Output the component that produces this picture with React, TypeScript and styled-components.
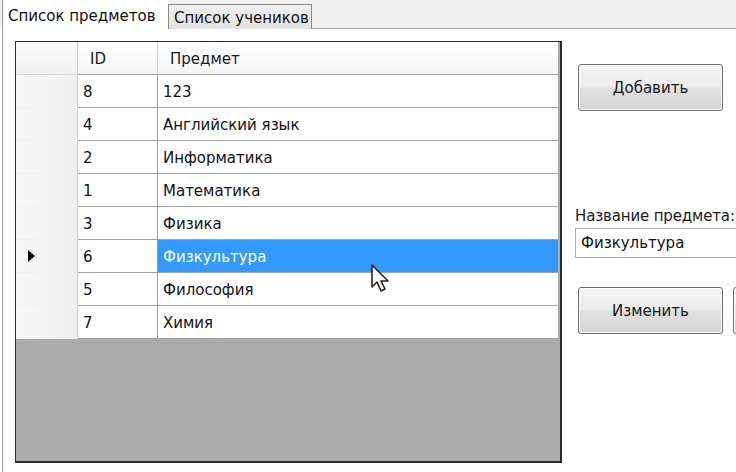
import React from 'react'
import styled, { createGlobalStyle } from 'styled-components'

const GlobalStyle = createGlobalStyle`
    html, body {
        margin: 0;
        padding: 0;
        background: #ffffff;
    }
    body {
        font-family: "DejaVu Sans", "Liberation Sans", Arial, sans-serif;
        color: #000;
    }
`

const subjects = [
    { id: 8, name: '123' },
    { id: 4, name: 'Английский язык' },
    { id: 2, name: 'Информатика' },
    { id: 1, name: 'Математика' },
    { id: 3, name: 'Физика' },
    { id: 6, name: 'Физкультура' },
    { id: 5, name: 'Философия' },
    { id: 7, name: 'Химия' },
]

const selectedId = 6

const App = () => {
    return (
        <>
            <GlobalStyle />
            <Window>
                <TabStrip>
                    <Tab active>Список предметов</Tab>
                    <Tab>Список учеников</Tab>
                    <StripRest />
                </TabStrip>
                <Panel>
                    <Grid>
                        <HeaderRow>
                            <RowHeaderCell header />
                            <HeaderCell>ID</HeaderCell>
                            <HeaderCell last>Предмет</HeaderCell>
                        </HeaderRow>
                        {subjects.map((s) => (
                            <Row key={s.id}>
                                <RowHeaderCell>
                                    {s.id === selectedId && <Marker />}
                                </RowHeaderCell>
                                <Cell>{s.id}</Cell>
                                <Cell last selected={s.id === selectedId}>{s.name}</Cell>
                            </Row>
                        ))}
                        <EmptyArea />
                    </Grid>
                    <Side>
                        <Button>Добавить</Button>
                        <FieldLabel>Название предмета:</FieldLabel>
                        <TextBox>Физкультура</TextBox>
                        <ButtonRow>
                            <Button>Изменить</Button>
                            <Button />
                        </ButtonRow>
                    </Side>
                </Panel>
                <Cursor viewBox="0 0 20 30">
                    <path
                        d="M2 1 L2 23 L7 18 L11 27 L15 25 L11 17 L18 17 Z"
                        fill="#ffffff"
                        stroke="#222"
                        strokeWidth="1.6"
                        strokeLinejoin="round"
                    />
                </Cursor>
            </Window>
        </>
    )
}

export default App

const Window = styled.div`
    position: relative;
    width: 736px;
    height: 472px;
    overflow: hidden;
    background: #ffffff;
    font-size: 15px;
    color: #111;
`

const TabStrip = styled.div`
    display: flex;
    height: 29px;
    background: #f0f0f0;
    padding-left: 2px;
`

const Tab = styled.div<{ active?: boolean }>`
    display: flex;
    align-items: center;
    box-sizing: border-box;
    font-size: 15px;
    white-space: nowrap;
    ${(p) =>
        p.active
            ? `
        width: 166px;
        height: 30px;
        padding: 2px 0 0 5px;
        background: #ffffff;
        border-left: 1px solid #9a9a9a;
        position: relative;
        z-index: 1;
    `
            : `
        width: 144px;
        height: 25px;
        margin-top: 4px;
        padding: 1px 0 0 5px;
        background: linear-gradient(#f0f0f0, #e2e2e2);
        border: 1px solid #8a8a8a;
        border-bottom: none;
    `}
`

const StripRest = styled.div`
    flex: 1;
    border-bottom: 1px solid #a8a8a8;
`

const Panel = styled.div`
    display: flex;
    height: 443px;
    box-sizing: border-box;
    margin-left: 2px;
    border-left: 1px solid #9a9a9a;
    padding: 12px 0 0 12px;
`

const Grid = styled.div`
    display: flex;
    flex-direction: column;
    box-sizing: border-box;
    width: 547px;
    height: 422px;
    border: 1px solid #2a2a2a;
    border-right-width: 2px;
    border-bottom-width: 2px;
    background: #ababab;
`

const Row = styled.div`
    display: grid;
    grid-template-columns: 62px 80px 1fr;
    height: 33px;
    margin-right: 2px;
`

const HeaderRow = styled(Row)`
    height: 33px;
    background: linear-gradient(#ffffff, #f4f4f4);
`

const RowHeaderCell = styled.div<{ header?: boolean }>`
    display: flex;
    align-items: center;
    justify-content: flex-start;
    padding-left: 12px;
    background: ${(p) => (p.header ? 'linear-gradient(#fafafa, #f0f0f0)' : 'linear-gradient(90deg, #f7f7f7, #efefef)')};
    border-bottom: 1px solid ${(p) => (p.header ? '#d8d8d8' : '#f0f0f0')};
    border-right: 1px solid #c8c8c8;
`

const Marker = styled.span`
    width: 0;
    height: 0;
    border-top: 6px solid transparent;
    border-bottom: 6px solid transparent;
    border-left: 7px solid #000;
`

const HeaderCell = styled.div<{ last?: boolean }>`
    display: flex;
    align-items: center;
    padding: 2px 0 0 12px;
    font-size: 15px;
    color: #1a1a1a;
    border-right: ${(p) => (p.last ? 'none' : '1px solid #d0d0d0')};
    border-bottom: 1px solid #a0a0a0;
`

const Cell = styled.div<{ last?: boolean; selected?: boolean }>`
    display: flex;
    align-items: center;
    padding: 1px 0 0 5px;
    font-size: 15px;
    white-space: nowrap;
    background: ${(p) => (p.selected ? '#3399ff' : '#ffffff')};
    color: ${(p) => (p.selected ? '#ffffff' : '#111111')};
    border-right: ${(p) => (p.last ? 'none' : '1px solid #a0a0a0')};
    border-bottom: 1px solid #a0a0a0;
`

const EmptyArea = styled.div`
    flex: 1;
`

const Side = styled.div`
    display: flex;
    flex-direction: column;
    padding: 23px 0 0 16px;
    flex: 1;
    min-width: 0;
`

const Button = styled.div`
    display: flex;
    align-items: center;
    justify-content: center;
    flex: none;
    box-sizing: border-box;
    width: 145px;
    height: 47px;
    border: 1px solid #707070;
    border-radius: 3px;
    background: linear-gradient(#f3f3f3 0%, #ececec 48%, #e0e0e0 52%, #d4d4d4 100%);
    box-shadow: inset 0 0 0 1px #fbfbfb;
    font-size: 15px;
    color: #1a1a1a;
`

const FieldLabel = styled.div`
    margin-top: 96px;
    margin-left: -3px;
    font-size: 15px;
    line-height: 18px;
    letter-spacing: -0.15px;
    white-space: nowrap;
    color: #1a1a1a;
`

const TextBox = styled.div`
    display: flex;
    align-items: center;
    box-sizing: border-box;
    margin-top: 3px;
    margin-left: -3px;
    width: 200px;
    height: 30px;
    padding-left: 5px;
    border: 1px solid #ababab;
    border-right: none;
    font-size: 15px;
    white-space: nowrap;
`

const ButtonRow = styled.div`
    display: flex;
    gap: 10px;
    margin-top: 29px;
`

const Cursor = styled.svg`
    position: absolute;
    left: 370px;
    top: 264px;
    width: 20px;
    height: 30px;
`
